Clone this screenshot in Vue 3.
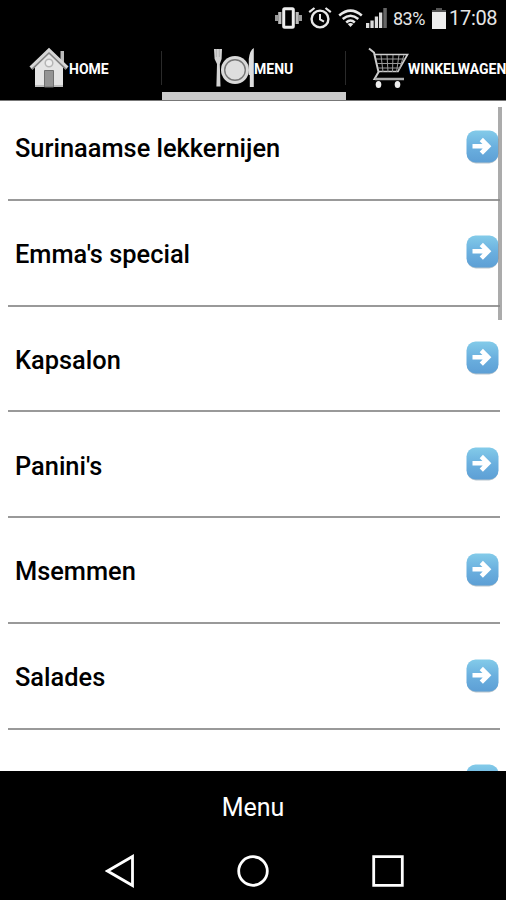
<script setup>
const items = [
  'Surinaamse lekkernijen',
  "Emma's special",
  'Kapsalon',
  "Panini's",
  'Msemmen',
  'Salades',
  '',
]
</script>

<template>
  <div class="phone">
    <header class="status">
      <svg class="vibrate" width="27" height="22" viewBox="0 0 27 22">
        <path d="M1.500 8v6M25.500 8v6" stroke="#999" stroke-width="3" />
        <path d="M4.800 5v12M22.200 5v12" stroke="#bbb" stroke-width="3.200" />
        <rect x="8.700" y="1.700" width="9.600" height="18.600" rx="1" fill="#000" stroke="#eee" stroke-width="3" />
      </svg>
      <svg class="alarm" width="24" height="22" viewBox="0 0 24 22" fill="none" stroke="#e8e8e8">
        <circle cx="12" cy="12" r="8.400" stroke-width="2.400" />
        <path d="M12 7v5.500l4 2.200" stroke-width="2" />
        <path d="M1.200 5.200L6.500 1M22.800 5.200L17.500 1" stroke-width="2.200" />
      </svg>
      <svg class="wifi" width="25" height="19" viewBox="0 0 25 19" fill="none" stroke="#e8e8e8" stroke-width="2.500">
        <path d="M1.200 6.500Q12.500-3.300 23.800 6.500M4.700 10Q12.500 3.500 20.300 10M8.200 13.500Q12.500 9.600 16.800 13.500" />
        <path d="M9.700 15Q12.500 13 15.300 15L12.500 18z" fill="#e8e8e8" stroke="none" />
      </svg>
      <svg class="signal" width="21" height="20" viewBox="0 0 21 20" fill="#ddd">
        <path d="M0 15h3.300v5H0zM4.400 12.500h3.300V20H4.400zM8.800 8.500h3.300V20H8.800zM13 4.500h3.300V20H13z" />
        <path d="M17.300 0h3.500v20h-3.500z" fill="#666" />
      </svg>
      <span class="percent">83%</span>
      <svg class="battery" width="14" height="21" viewBox="0 0 14 21">
        <path d="M4 0h6v2h4v3H0V2h4z" fill="#555" />
        <path d="M0 4h14v17H0z" fill="#eee" />
      </svg>
      <span class="clock">17:08</span>
    </header>

    <nav class="tabs">
      <div class="tab home">
        <svg width="40" height="42" viewBox="0 0 40 42">
          <path d="M31.500 4h3.500v13l-3.500-4z" fill="#bbb" />
          <path d="M6 20L20 6l14 14v20H6z" fill="#e4e4e4" />
          <path d="M6 38h28v2H6z" fill="#bdbdbd" />
          <path d="M2.500 22L20 5l17.500 17" fill="none" stroke="#858585" stroke-width="3" />
          <path d="M1.500 20.500L20 2.800 38.500 20.500" fill="none" stroke="#d5d5d5" stroke-width="3" />
          <circle cx="20" cy="16" r="3.800" fill="#eee" stroke="#b5b5b5" stroke-width="1.500" />
          <path d="M15.500 23.500h9V40h-9z" fill="#949494" stroke="#707070" />
        </svg>
        <span>HOME</span>
      </div>
      <div class="tab menu active">
        <svg width="42" height="42" viewBox="0 0 42 42">
          <path d="M1 2h8l-.400 10-1.800 5 .7 22.500H3.400l.6-22.500-2.400-5z" fill="#d4d4d4" />
          <path d="M3.300 2v8M6.300 2v8" stroke="#aaa" stroke-width=".8" />
          <circle cx="22" cy="23" r="14" fill="#d9d9d9" />
          <circle cx="22" cy="23" r="10.300" fill="#dedede" stroke="#777" stroke-width="1.400" />
          <path d="M40.800 1v39h-4V28h-1V12q1-9 5-11z" fill="#dedede" />
        </svg>
        <span>MENU</span>
      </div>
      <div class="tab cart">
        <svg width="42" height="42" viewBox="0 0 42 42" fill="none" stroke="#ccc">
          <path d="M1 1.500l5 4 4.500 19.500-4 7h29.500" stroke-width="2" />
          <path d="M6.500 7.500h33L30 24.500H11" stroke-width="1.700" />
          <path d="M8 12h28.500M9 16.500h25M10 21h22M13 8l2 17M19 8l1 17M25 8l-.500 17M31 8l-2.500 17M36 8l-5 15" stroke="#999" stroke-width="1" />
          <path d="M7 32h29" stroke="#aaa" stroke-width="2.500" />
          <ellipse cx="10.500" cy="37.500" rx="2.800" ry="3.500" fill="#eee" stroke="none" />
          <ellipse cx="29.500" cy="37.500" rx="2.800" ry="3.500" fill="#eee" stroke="none" />
        </svg>
        <span>WINKELWAGEN</span>
      </div>
    </nav>

    <main class="content">
      <ul class="list">
        <li v-for="item in items" :key="item" class="row">
          <span class="label">{{ item }}</span>
          <svg class="arrow" width="33" height="34" viewBox="0 0 33 34">
            <defs>
              <linearGradient id="blue" x1="0" y1="0" x2="0" y2="1">
                <stop offset="0" stop-color="#83cbe9" />
                <stop offset=".5" stop-color="#6bb0df" />
                <stop offset="1" stop-color="#5d9fd5" />
              </linearGradient>
            </defs>
            <rect x="1" y="2" width="31" height="31.500" rx="9" fill="#b9c6cd" />
            <rect x=".5" y=".5" width="32" height="32" rx="9" fill="url(#blue)" />
            <path d="M6.500 16.300H21M15.300 9.500l6.800 6.800-6.800 6.800" fill="none" stroke="#fff" stroke-width="4.600" />
          </svg>
        </li>
      </ul>
      <div class="scrollbar"></div>
    </main>

    <footer>
      <div class="title">Menu</div>
      <div class="keys">
        <svg width="30" height="34" viewBox="0 0 30 34"><path d="M2.500 17L27.500 2.500v29z" /></svg>
        <svg width="34" height="34" viewBox="0 0 34 34"><circle cx="17" cy="17" r="14.300" /></svg>
        <svg width="34" height="34" viewBox="0 0 34 34"><path d="M2.700 2.700h28.600v28.600H2.700z" /></svg>
      </div>
    </footer>
  </div>
</template>

<style>
body {
  background: #000;
}
</style>

<style scoped>
.phone {
  width: 506px;
  height: 900px;
  overflow: hidden;
  display: flex;
  flex-direction: column;
  background: #000;
  color: #fff;
  font-family: Roboto, "Liberation Sans", sans-serif;
}
svg {
  display: block;
  flex: none;
}
.status {
  height: 36px;
  flex: none;
  display: flex;
  align-items: center;
  padding-left: 275px;
  box-sizing: border-box;
  color: #e6e6e6;
  white-space: nowrap;
}
.alarm { margin-left: 6px; }
.wifi { margin-left: 6px; }
.signal { margin-left: 3px; }
.percent {
  width: 39px;
  margin-left: 6px;
  font-size: 18px;
  letter-spacing: -0.5px;
}
.clock {
  margin-left: 3px;
  font-size: 20px;
  letter-spacing: -0.3px;
}
.tabs {
  height: 65px;
  flex: none;
  display: flex;
  box-sizing: border-box;
  border-bottom: 1px solid #777;
}
.tab {
  box-sizing: border-box;
  height: 64px;
  flex: none;
  display: flex;
  align-items: center;
  font-size: 14px;
  font-weight: 700;
  white-space: nowrap;
  background: linear-gradient(#2a2a2a, #2a2a2a) right 15px / 1px 34px no-repeat;
}
.tab span {
  padding-top: 2px;
}
.home {
  width: 162px;
  padding-left: 29px;
}
.menu {
  width: 184px;
  padding-left: 51px;
  border-bottom: 8px solid #cbcbcb;
}
.menu svg,
.menu span {
  margin-top: 8px;
}
.menu span {
  margin-left: -1px;
}
.cart {
  width: 184px;
  padding-left: 22px;
  background: none;
}
.cart span {
  margin-left: -2px;
}
.content {
  height: 670px;
  flex: none;
  overflow: hidden;
  position: relative;
  background: #fff;
  color: #000;
}
.list {
  list-style: none;
  margin: 0;
  padding: 0 6px 0 8px;
}
.row {
  height: 105.8px;
  box-sizing: border-box;
  display: flex;
  align-items: center;
  justify-content: space-between;
  padding: 2.5px 1px 0 7px;
  border-bottom: 2px solid #999;
}
.row:first-child {
  height: 99.8px;
  padding-top: 0;
  padding-bottom: 4px;
}
.row:first-child .arrow {
  margin-bottom: 2px;
}
.arrow {
  margin: 0 0 3px auto;
}
.label {
  font-size: 25.4px;
  font-weight: 500;
}
.scrollbar {
  position: absolute;
  top: 6px;
  right: 4px;
  width: 4px;
  height: 213px;
  background: rgba(135, 135, 135, 0.7);
}
footer {
  height: 129px;
  flex: none;
}
.title {
  height: 72px;
  line-height: 73px;
  text-align: center;
  font-size: 25px;
}
.keys {
  display: flex;
  align-items: center;
  padding-left: 105px;
  padding-top: 11px;
}
.keys svg {
  fill: none;
  stroke: #fff;
  stroke-width: 2.8px;
}
.keys svg + svg {
  margin-left: 101px;
}
</style>
